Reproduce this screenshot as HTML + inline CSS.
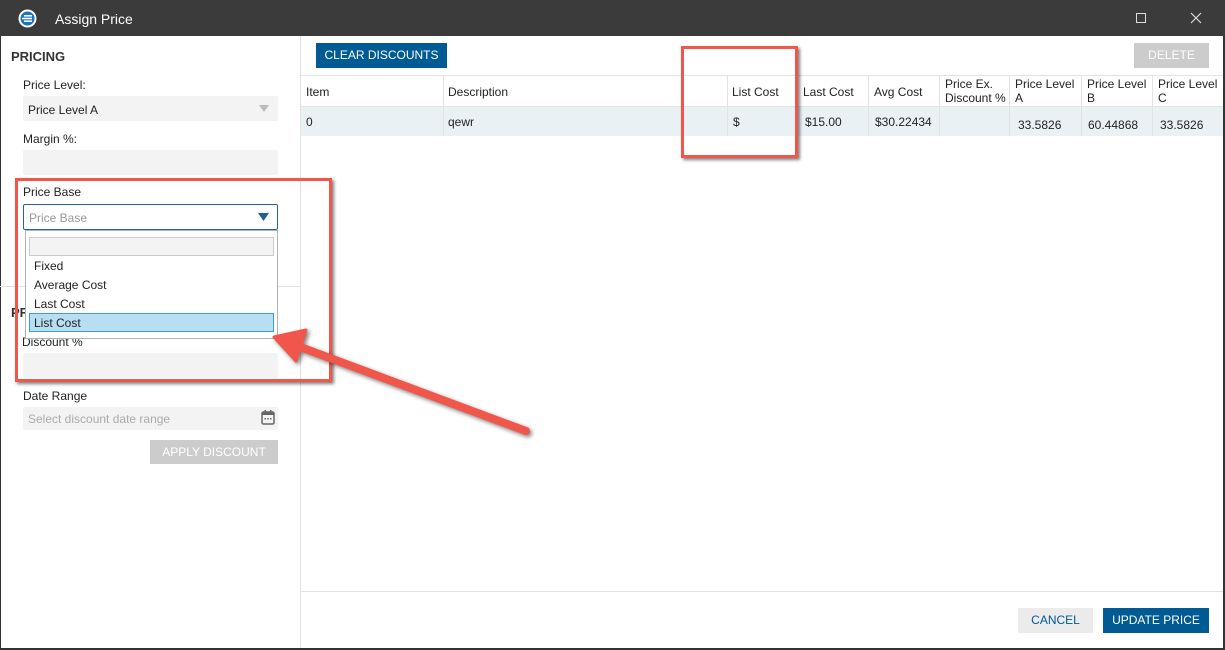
<!DOCTYPE html>
<html><head><meta charset="utf-8"><style>
*{box-sizing:border-box;margin:0;padding:0}
body{width:1225px;height:650px;overflow:hidden;background:#fff;font-family:"Liberation Sans",sans-serif;font-size:12px;color:#222;position:relative}
.a{position:absolute}
.in{position:absolute;background:#f3f3f3;border-radius:2px}
.lbl{position:absolute;font-size:12px;color:#222}
.th{position:absolute;top:77px;font-size:12px;line-height:14px;color:#222}
.td{position:absolute;top:115px;font-size:12px;color:#222}
.vl{position:absolute;width:1px;background:#e2e2e2}
.red{position:absolute;border:3px solid #f0564a;box-shadow:2px 2px 3px rgba(0,0,0,.5)}
</style></head><body>
<!-- title bar -->
<div class="a" style="left:0;top:0;width:1225px;height:36px;background:#3b3b3b"></div>
<svg class="a" style="left:18px;top:9px" width="19" height="19" viewBox="0 0 19 19"><circle cx="9.5" cy="9.5" r="9" fill="#fff"/><circle cx="9.5" cy="9.5" r="7" fill="#1b75bb"/><rect x="6" y="6" width="8" height="1.6" fill="#fff"/><rect x="4" y="8.7" width="10" height="1.6" fill="#fff"/><rect x="6" y="11.4" width="8" height="1.6" fill="#fff"/></svg>
<div class="a" style="left:55px;top:11px;color:#fff;font-size:14px">Assign Price</div>
<div class="a" style="left:1136px;top:13px;width:10px;height:10px;border:1px solid #ddd"></div>
<svg class="a" style="left:1190px;top:12px" width="12" height="12"><path d="M1 1L11 11M11 1L1 11" stroke="#ddd" stroke-width="1.2"/></svg>
<!-- borders -->
<div class="a" style="left:0;top:36px;width:1px;height:614px;background:#333"></div>
<div class="a" style="left:1223px;top:36px;width:2px;height:614px;background:#333"></div>
<div class="a" style="left:0;top:648px;width:1225px;height:2px;background:#333"></div>
<div class="vl" style="left:300px;top:36px;height:612px"></div>
<!-- left panel -->
<div class="a" style="left:11px;top:49px;font-size:13px;font-weight:bold;color:#333">PRICING</div>
<div class="lbl" style="left:23px;top:78px">Price Level:</div>
<div class="in" style="left:23px;top:96px;width:255px;height:25px"></div>
<div class="lbl" style="left:28px;top:103px">Price Level A</div>
<svg class="a" style="left:259px;top:105px" width="10" height="7"><path d="M0 0H10L5 7Z" fill="#bbb"/></svg>
<div class="lbl" style="left:23px;top:132px">Margin %:</div>
<div class="in" style="left:23px;top:150px;width:255px;height:25px"></div>
<div class="a" style="left:0;top:286px;width:300px;height:1px;background:#e2e2e2"></div>
<div class="lbl" style="left:11px;top:305px;font-weight:bold;font-size:13px;color:#333">PR</div>
<div class="lbl" style="left:23px;top:185px">Price Base</div>
<div class="a" style="left:23px;top:204px;width:255px;height:26px;border:1px solid #2a6496;border-radius:2px;background:#fff"></div>
<div class="lbl" style="left:29px;top:211px;color:#999">Price Base</div>
<svg class="a" style="left:258px;top:213px" width="11" height="8"><path d="M0 0H11L5.5 8Z" fill="#1f5f96"/></svg>
<div class="lbl" style="left:22px;top:335px">Discount %</div>
<div class="in" style="left:23px;top:353px;width:255px;height:25px"></div>
<!-- popup -->
<div class="a" style="left:25px;top:230px;width:253px;height:109px;background:#fff;border:1px solid #a9b4bb"></div>
<div class="a" style="left:29px;top:237px;width:245px;height:19px;background:#f3f3f3;border:1px solid #ccc"></div>
<div class="lbl" style="left:34px;top:259px">Fixed</div>
<div class="lbl" style="left:34px;top:278px">Average Cost</div>
<div class="lbl" style="left:34px;top:297px">Last Cost</div>
<div class="a" style="left:29px;top:313px;width:245px;height:19px;background:#b7dff1;border:1px solid #3aa0d8"></div>
<div class="lbl" style="left:34px;top:316px">List Cost</div>
<div class="lbl" style="left:23px;top:389px">Date Range</div>
<div class="in" style="left:23px;top:407px;width:255px;height:23px"></div>
<div class="lbl" style="left:28px;top:412px;color:#aaa">Select discount date range</div>
<svg class="a" style="left:261px;top:410px" width="14" height="15"><rect x="1" y="2" width="12" height="12" rx="1.5" fill="none" stroke="#666" stroke-width="1.5"/><rect x="1" y="2" width="12" height="3" fill="#666"/><rect x="3.5" y="0" width="1.5" height="3" fill="#666"/><rect x="9" y="0" width="1.5" height="3" fill="#666"/><rect x="3.5" y="8" width="1.5" height="1.5" fill="#666"/><rect x="6.3" y="8" width="1.5" height="1.5" fill="#666"/><rect x="9" y="8" width="1.5" height="1.5" fill="#666"/></svg>
<div class="a" style="left:150px;top:440px;width:128px;height:24px;background:#cccccc;color:#fff;text-align:center;line-height:24px;font-size:12px">APPLY DISCOUNT</div>
<!-- right panel -->
<div class="a" style="left:316px;top:43px;width:131px;height:25px;background:#005a94;color:#fff;text-align:center;line-height:25px;font-size:12px">CLEAR DISCOUNTS</div>
<div class="a" style="left:1134px;top:43px;width:75px;height:25px;background:#cccccc;color:#fff;text-align:center;line-height:25px;font-size:12px">DELETE</div>
<div class="a" style="left:301px;top:75px;width:922px;height:1px;background:#e2e2e2"></div>
<div class="a" style="left:301px;top:106px;width:922px;height:1px;background:#e2e2e2"></div>
<div class="a" style="left:301px;top:107px;width:922px;height:29px;background:#eaf1f5"></div>
<div class="vl" style="left:443px;top:76px;height:60px"></div>
<div class="vl" style="left:727px;top:76px;height:60px"></div>
<div class="vl" style="left:797px;top:76px;height:60px"></div>
<div class="vl" style="left:868px;top:76px;height:60px"></div>
<div class="vl" style="left:939px;top:76px;height:60px"></div>
<div class="vl" style="left:1009px;top:76px;height:60px"></div>
<div class="vl" style="left:1081px;top:76px;height:60px"></div>
<div class="vl" style="left:1152px;top:76px;height:60px"></div>
<div class="th" style="left:306px;top:85px">Item</div>
<div class="th" style="left:448px;top:85px">Description</div>
<div class="th" style="left:732px;top:85px">List Cost</div>
<div class="th" style="left:803px;top:85px">Last Cost</div>
<div class="th" style="left:874px;top:85px">Avg Cost</div>
<div class="th" style="left:945px">Price Ex.<br>Discount %</div>
<div class="th" style="left:1015px">Price Level<br>A</div>
<div class="th" style="left:1087px">Price Level<br>B</div>
<div class="th" style="left:1158px">Price Level<br>C</div>
<div class="td" style="left:306px">0</div>
<div class="td" style="left:448px">qewr</div>
<div class="td" style="left:733px">$</div>
<div class="td" style="left:805px">$15.00</div>
<div class="td" style="left:875px">$30.22434</div>
<div class="td" style="left:1018px;top:118px">33.5826</div>
<div class="td" style="left:1088px;top:118px">60.44868</div>
<div class="td" style="left:1160px;top:118px">33.5826</div>
<div class="a" style="left:301px;top:591px;width:922px;height:1px;background:#e2e2e2"></div>
<div class="a" style="left:1018px;top:608px;width:75px;height:25px;background:#ebebeb;color:#005a94;text-align:center;line-height:25px">CANCEL</div>
<div class="a" style="left:1103px;top:608px;width:106px;height:25px;background:#005a94;color:#fff;text-align:center;line-height:25px">UPDATE PRICE</div>
<!-- annotations -->
<div class="red" style="left:15px;top:178px;width:317px;height:204px"></div>
<div class="red" style="left:681px;top:46px;width:117px;height:112px"></div>
<svg class="a" style="left:0;top:0;filter:drop-shadow(2px 2px 2px rgba(0,0,0,.5))" width="1225" height="650"><path d="M526 431L295 345" stroke="#f0564a" stroke-width="8" stroke-linecap="round"/><path d="M274 337L306 330L296 361Z" fill="#f0564a" stroke="#f0564a" stroke-width="3" stroke-linejoin="round"/></svg>
</body></html>
